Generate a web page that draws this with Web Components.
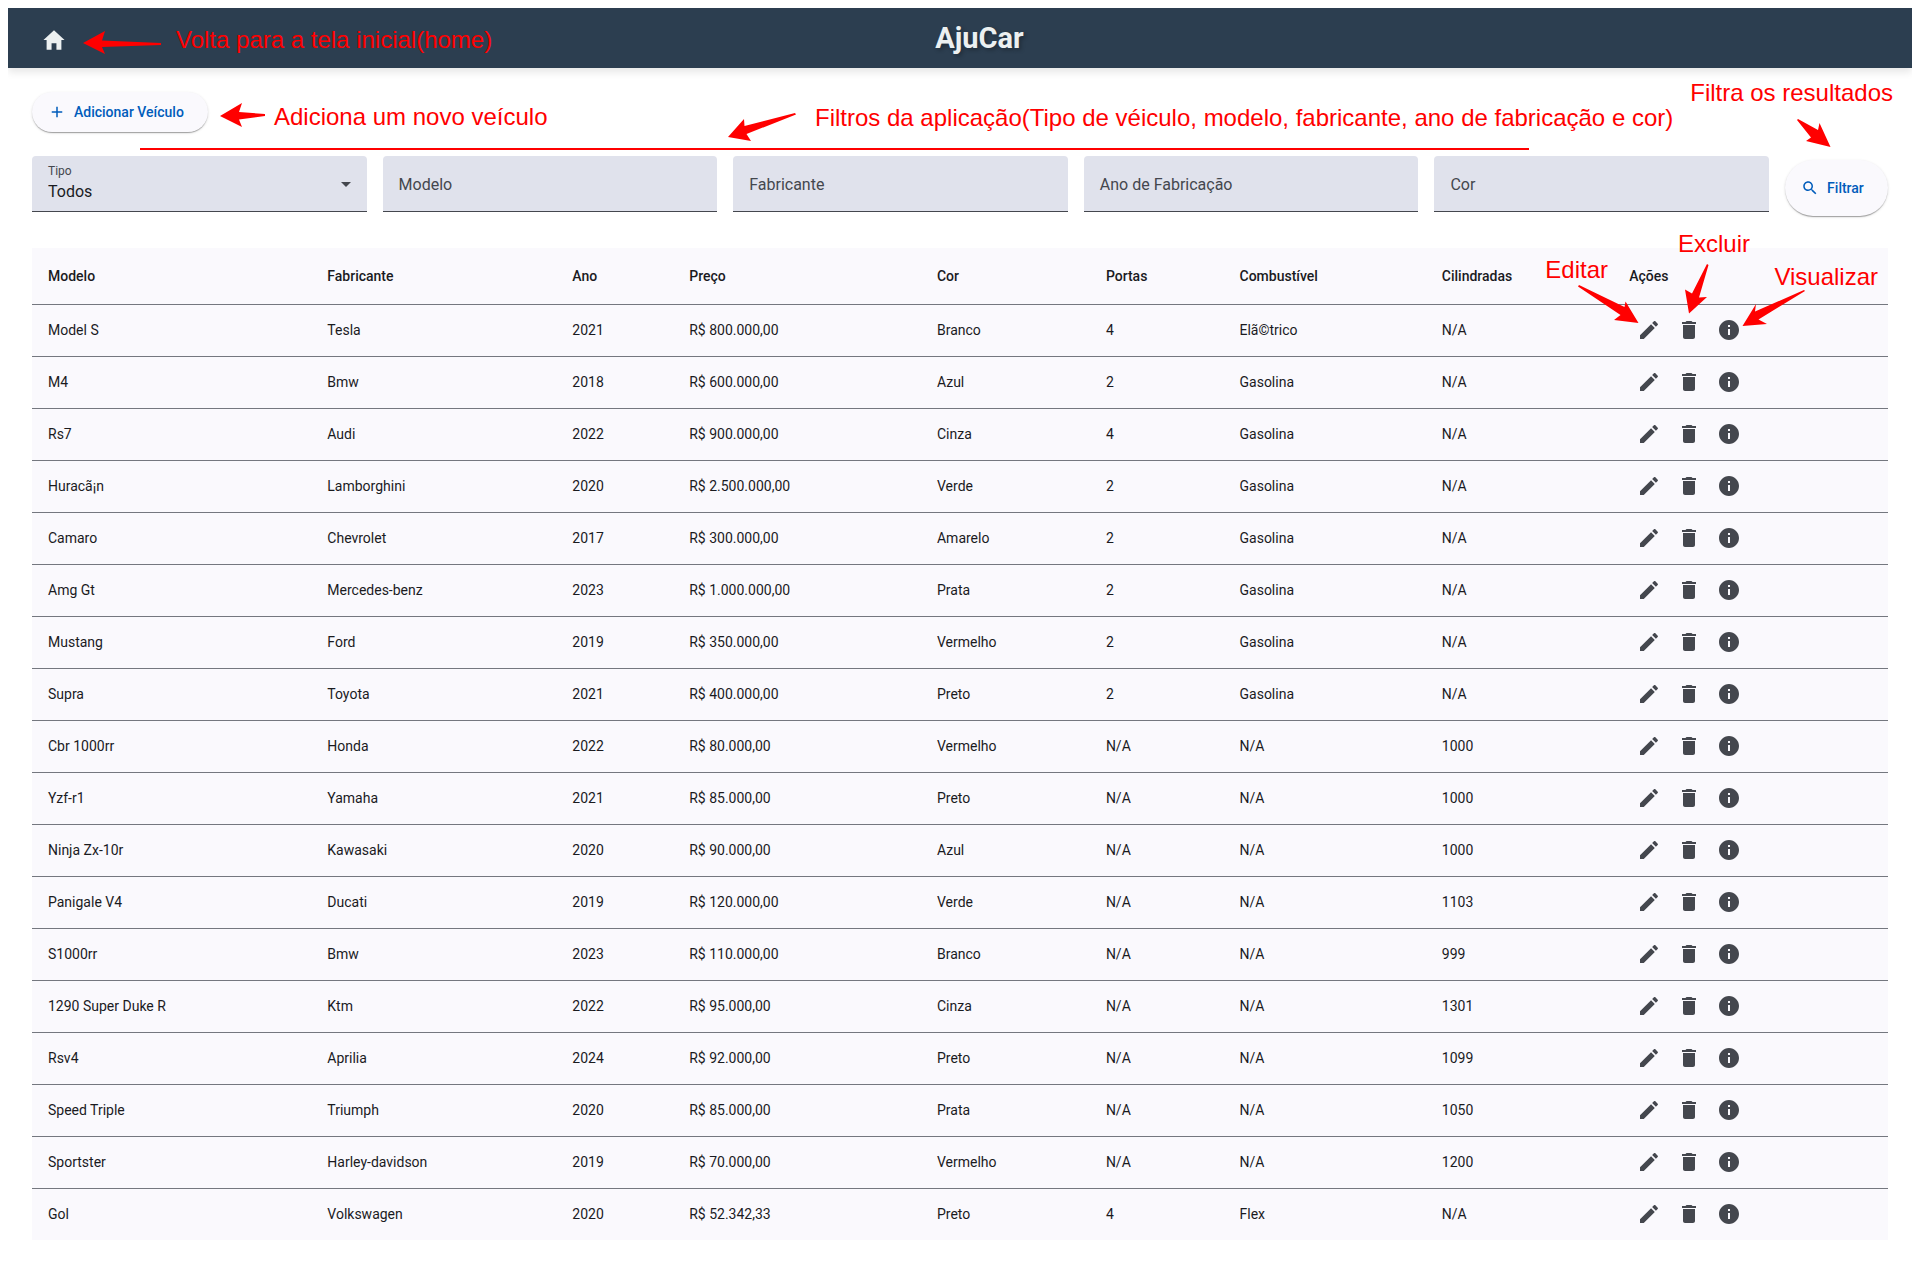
<!DOCTYPE html>
<html lang="pt-BR">
<head>
<meta charset="utf-8">
<meta name="viewport" content="width=device-width, initial-scale=1">
<title>AjuCar</title>
<style>
  body { margin: 8px; background: #fff; color: #1a1b1f; font-family: Roboto, "Liberation Sans", sans-serif; }
</style>
</head>
<body>
<car-app></car-app>

<script>
const ICONS = {
  home: ['0 0 512 512', 'M208 448V320h96v128h97.6V256H464L256 64 48 256h62.4v192z'],
  add: ['0 0 24 24', 'M19 13h-6v6h-2v-6H5v-2h6V5h2v6h6v2z'],
  search: ['0 0 24 24', 'M15.5 14h-.79l-.28-.27C15.41 12.59 16 11.11 16 9.5 16 5.91 13.09 3 9.5 3S3 5.91 3 9.5 5.91 16 9.5 16c1.61 0 3.09-.59 4.23-1.57l.27.28v.79l5 4.99L20.49 19l-4.99-5zm-6 0C7.01 14 5 11.99 5 9.5S7.01 5 9.5 5 14 7.01 14 9.5 11.99 14 9.5 14z'],
  edit: ['0 0 24 24', 'M3 17.25V21h3.75L17.81 9.94l-3.75-3.75L3 17.25zM20.71 7.04c.39-.39.39-1.02 0-1.41l-2.34-2.34c-.39-.39-1.02-.39-1.41 0l-1.83 1.83 3.75 3.75 1.83-1.83z'],
  delete: ['0 0 24 24', 'M6 19c0 1.1.9 2 2 2h8c1.1 0 2-.9 2-2V7H6v12zM19 4h-3.5l-1-1h-5l-1 1H5v2h14V4z'],
  info: ['0 0 24 24', 'M12 2C6.48 2 2 6.48 2 12s4.48 10 10 10 10-4.48 10-10S17.52 2 12 2zm1 15h-2v-6h2v6zm0-8h-2V7h2v2z']
};

class BaseElement extends HTMLElement {
  connectedCallback() {
    if (this.shadowRoot) return;
    this.attachShadow({ mode: 'open' }).innerHTML = this.template();
  }
}

customElements.define('car-icon', class extends BaseElement {
  template() {
    const [box, d] = ICONS[this.getAttribute('name')];
    return `<style>
      :host { display: block; flex: none; width: var(--icon-size, 24px); height: var(--icon-size, 24px); }
      svg { display: block; width: 100%; height: 100%; fill: currentColor; }
    </style><svg viewBox="${box}" aria-hidden="true"><path d="${d}"/></svg>`;
  }
});

customElements.define('car-header', class extends BaseElement {
  template() {
    return `<style>
      :host { display: block; }
      header { display: flex; align-items: center; height: 60px; padding: 0 20px; background: #2c3e50; color: #ecf0f1; box-shadow: 0 4px 8px rgba(0,0,0,.1); }
      a { --icon-size: 26px; color: inherit; padding: 3px 0 0 13px; }
      h1 { flex: 1; margin: 0; text-align: center; font-size: 29px; line-height: 60px; font-weight: 700; text-shadow: 2px 2px 4px rgba(0,0,0,.3); }
    </style>
    <header><a href="#" aria-label="Home"><car-icon name="home"></car-icon></a><h1><slot></slot></h1></header>`;
  }
});

customElements.define('pill-button', class extends BaseElement {
  template() {
    return `<style>
      :host { display: block; }
      button { display: flex; align-items: center; justify-content: center; gap: 8px; width: 100%; height: var(--pill-height, 40px); padding: 0 24px 0 16px; border: 0; border-radius: 999px; background: #faf9fd; color: #005cbb; font: 500 14px/20px Roboto, sans-serif; white-space: nowrap; cursor: pointer;
        --icon-size: 18px; box-shadow: 0 2px 1px -1px rgba(0,0,0,.2), 0 1px 1px rgba(0,0,0,.14), 0 1px 3px rgba(0,0,0,.12); }
    </style>
    <button type="button"><car-icon name="${this.getAttribute('icon')}"></car-icon><slot></slot></button>`;
  }
});

const FIELD_STYLE = `
  :host { display: block; min-width: 0; }
  .field { display: grid; box-sizing: border-box; height: 56px; background: #e0e2ec; border-bottom: 1px solid #44474e; border-radius: 4px 4px 0 0; }
  .field > * { grid-area: 1 / 1; }
  label { color: #44474e; font-size: 16px; line-height: 24px; padding: 0 16px; pointer-events: none; z-index: 1; }
  input, select { box-sizing: border-box; width: 100%; height: 100%; min-width: 0; margin: 0; border: 0; outline: 0; background: none; color: #1a1b1f; font: 16px/24px Roboto, sans-serif; appearance: none; }
  .float { font-size: 12px; line-height: 16px; padding-top: 7px; }`;

customElements.define('text-field', class extends BaseElement {
  template() {
    return `<style>${FIELD_STYLE}
      label { align-self: center; padding-top: 2px; }
      input { padding: 24px 16px 7px; }
      .field:focus-within label, input:not(:placeholder-shown) + label { align-self: start; font-size: 12px; line-height: 16px; padding-top: 7px; }
    </style>
    <div class="field"><input id="control" type="text" placeholder=" "><label for="control">${this.getAttribute('label')}</label></div>`;
  }
});

customElements.define('select-field', class extends BaseElement {
  template() {
    const options = this.getAttribute('options').split(',').map(o => `<option>${o}</option>`).join('');
    return `<style>${FIELD_STYLE}
      select { padding: 24px 32px 7px 16px; }
      label { align-self: start; }
      .caret { align-self: center; justify-self: end; margin: 2px 16px 0 0; border: 5px solid transparent; border-top-color: #44474e; border-bottom: 0; pointer-events: none; }
    </style>
    <div class="field"><select id="control">${options}</select><label class="float" for="control">${this.getAttribute('label')}</label><span class="caret"></span></div>`;
  }
});

customElements.define('filter-bar', class extends BaseElement {
  template() {
    return `<style>
      :host { display: block; }
      form { display: flex; gap: 16px; }
      text-field, select-field { flex: 1 1 0; }
      pill-button { --pill-height: 56px; flex: none; min-width: 103px; padding-top: 4px; }
    </style>
    <form>
      <select-field label="Tipo" options="Todos,Carro,Moto"></select-field>
      <text-field label="Modelo"></text-field>
      <text-field label="Fabricante"></text-field>
      <text-field label="Ano de Fabricação"></text-field>
      <text-field label="Cor"></text-field>
      <pill-button icon="search">Filtrar</pill-button>
    </form>`;
  }
});

customElements.define('icon-button', class extends BaseElement {
  template() {
    return `<style>
      :host { display: block; }
      button { display: flex; align-items: center; justify-content: center; width: 40px; height: 40px; padding: 0; border: 0; border-radius: 50%; background: none; color: #44474e; cursor: pointer; }
    </style>
    <button type="button" aria-label="${this.getAttribute('label')}"><car-icon name="${this.getAttribute('icon')}"></car-icon></button>`;
  }
});

const COLUMNS = ['Modelo', 'Fabricante', 'Ano', 'Preço', 'Cor', 'Portas', 'Combustível', 'Cilindradas'];
const VEHICLES = [
  ['Model S', 'Tesla', '2021', 'R$ 800.000,00', 'Branco', '4', 'Elã©trico', 'N/A'],
  ['M4', 'Bmw', '2018', 'R$ 600.000,00', 'Azul', '2', 'Gasolina', 'N/A'],
  ['Rs7', 'Audi', '2022', 'R$ 900.000,00', 'Cinza', '4', 'Gasolina', 'N/A'],
  ['Huracã¡n', 'Lamborghini', '2020', 'R$ 2.500.000,00', 'Verde', '2', 'Gasolina', 'N/A'],
  ['Camaro', 'Chevrolet', '2017', 'R$ 300.000,00', 'Amarelo', '2', 'Gasolina', 'N/A'],
  ['Amg Gt', 'Mercedes-benz', '2023', 'R$ 1.000.000,00', 'Prata', '2', 'Gasolina', 'N/A'],
  ['Mustang', 'Ford', '2019', 'R$ 350.000,00', 'Vermelho', '2', 'Gasolina', 'N/A'],
  ['Supra', 'Toyota', '2021', 'R$ 400.000,00', 'Preto', '2', 'Gasolina', 'N/A'],
  ['Cbr 1000rr', 'Honda', '2022', 'R$ 80.000,00', 'Vermelho', 'N/A', 'N/A', '1000'],
  ['Yzf-r1', 'Yamaha', '2021', 'R$ 85.000,00', 'Preto', 'N/A', 'N/A', '1000'],
  ['Ninja Zx-10r', 'Kawasaki', '2020', 'R$ 90.000,00', 'Azul', 'N/A', 'N/A', '1000'],
  ['Panigale V4', 'Ducati', '2019', 'R$ 120.000,00', 'Verde', 'N/A', 'N/A', '1103'],
  ['S1000rr', 'Bmw', '2023', 'R$ 110.000,00', 'Branco', 'N/A', 'N/A', '999'],
  ['1290 Super Duke R', 'Ktm', '2022', 'R$ 95.000,00', 'Cinza', 'N/A', 'N/A', '1301'],
  ['Rsv4', 'Aprilia', '2024', 'R$ 92.000,00', 'Preto', 'N/A', 'N/A', '1099'],
  ['Speed Triple', 'Triumph', '2020', 'R$ 85.000,00', 'Prata', 'N/A', 'N/A', '1050'],
  ['Sportster', 'Harley-davidson', '2019', 'R$ 70.000,00', 'Vermelho', 'N/A', 'N/A', '1200'],
  ['Gol', 'Volkswagen', '2020', 'R$ 52.342,33', 'Preto', '4', 'Flex', 'N/A']
];

customElements.define('vehicle-table', class extends BaseElement {
  template() {
    const actions = `<td><div class="actions">
      <icon-button icon="edit" label="Editar"></icon-button>
      <icon-button icon="delete" label="Excluir"></icon-button>
      <icon-button icon="info" label="Visualizar"></icon-button></div></td>`;
    return `<style>
      :host { display: block; }
      table { width: 100%; border-spacing: 0; background: #faf9fd; color: #1a1b1f; font-size: 14px; line-height: 20px; }
      col { width: var(--w); }
      th, td { box-sizing: border-box; height: 52px; padding: 0 16px 2px; text-align: left; white-space: nowrap; border-bottom: 1px solid #74777f; }
      th { height: 57px; padding-bottom: 0; font-weight: 500; }
      tbody tr:last-child td { height: 51px; border-bottom: 0; }
      .actions { display: flex; }
    </style>
    <table>
      <colgroup>${[15.05, 13.2, 6.3, 13.35, 9.1, 7.2, 10.9, 10.1, 14.8].map(w => `<col style="--w:${w}%">`).join('')}</colgroup>
      <thead><tr>${COLUMNS.map(c => `<th scope="col">${c}</th>`).join('')}<th scope="col">Ações</th></tr></thead>
      <tbody>${VEHICLES.map(v => `<tr>${v.map(c => `<td>${c}</td>`).join('')}${actions}</tr>`).join('')}</tbody>
    </table>`;
  }
});

/* Red help notes drawn over the screen: one group keeps to the left edge, the other to the right edge. */
customElements.define('help-notes', class extends BaseElement {
  template() {
    return `<style>
      :host { position: absolute; inset: 0 0 auto 0; height: 340px; overflow: hidden; pointer-events: none; color: #f00; font: 24px/28px "Liberation Sans", Arial, sans-serif; }
      svg { position: absolute; top: 0; fill: #f00; }
      .left { left: 0; }
      .right { right: 0; }
      span { position: absolute; white-space: nowrap; }
      .rule { position: absolute; left: 140px; right: 391px; top: 148px; height: 2px; background: #f00; }
    </style>
    <svg class="left" width="800" height="340" viewBox="0 0 800 340" aria-hidden="true">
      <path d="M83 43 105 31 102 40.500 161 43V45L102 47 105 54Z"/>
      <path d="M220 116 242 103 239 112 265 114V116L239 119.500 242 127Z"/>
      <path d="M728 137 744 119 744.500 126 795 113 796 114.500 746.500 134 751 141Z"/>
    </svg>
    <svg class="right" width="380" height="340" viewBox="1540 0 380 340" aria-hidden="true">
      <path d="M1798 119 1818 130 1819.500 123 1830.500 147 1806 141 1811 137.500 1797 120Z"/>
      <path d="M1579 285 1624.500 307 1625.500 301.500 1638.500 323 1614 320 1620.500 315 1578 286.500Z"/>
      <path d="M1708.500 265 1699 297.500 1707 297 1689 313.500 1685 289.500 1692 293.500 1707 264Z"/>
      <path d="M1805 291 1758.500 319.500 1767 324 1742.500 326 1756 304 1755 311.500 1804 290Z"/>
    </svg>
    <div class="rule"></div>
    <span style="left:176px;top:26px">Volta para a tela inicial(home)</span>
    <span style="left:274px;top:103px">Adiciona um novo veículo</span>
    <span style="left:815px;top:104px">Filtros da aplicação(Tipo de véiculo, modelo, fabricante, ano de fabricação e cor)</span>
    <span style="right:27px;top:79px">Filtra os resultados</span>
    <span style="right:312px;top:256px">Editar</span>
    <span style="right:170px;top:230px">Excluir</span>
    <span style="right:42px;top:263px">Visualizar</span>`;
  }
});

customElements.define('car-app', class extends BaseElement {
  template() {
    return `<style>
      :host { display: block; }
      main { display: flex; flex-direction: column; padding: 24px; }
      .toolbar { display: flex; margin-bottom: 24px; }
      filter-bar { margin-bottom: 32px; }
    </style>
    <car-header>AjuCar</car-header>
    <main>
      <div class="toolbar"><pill-button icon="add">Adicionar Veículo</pill-button></div>
      <filter-bar></filter-bar>
      <vehicle-table></vehicle-table>
    </main>
    <help-notes></help-notes>`;
  }
});
</script>
</body>
</html>
